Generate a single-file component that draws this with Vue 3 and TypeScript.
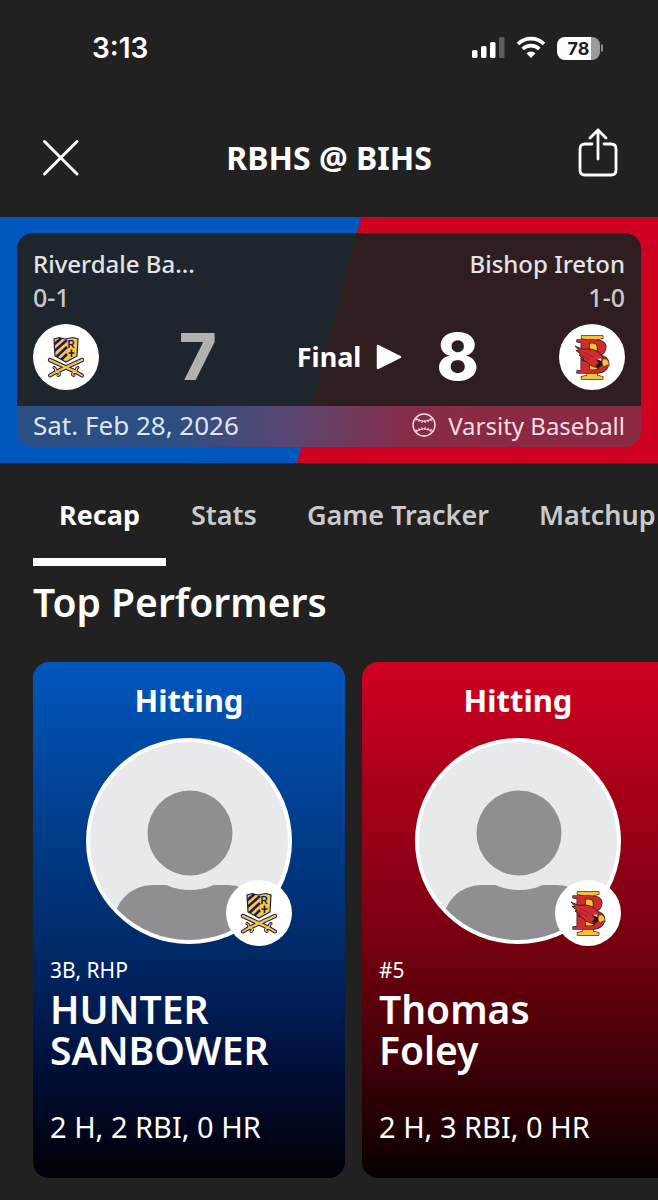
<script setup lang="ts">
import { ref } from 'vue'

type Team = 'riverdale' | 'ireton'

interface Performer {
  team: Team
  category: string
  detail: string
  first: string
  last: string
  stats: string
}

const tabs: string[] = ['Recap', 'Stats', 'Game Tracker', 'Matchup']
const activeTab = ref<string>('Recap')

const performers: Performer[] = [
  { team: 'riverdale', category: 'Hitting', detail: '3B, RHP', first: 'HUNTER', last: 'SANBOWER', stats: '2 H, 2 RBI, 0 HR' },
  { team: 'ireton', category: 'Hitting', detail: '#5', first: 'Thomas', last: 'Foley', stats: '2 H, 3 RBI, 0 HR' },
]
</script>

<template>
  <svg class="defs" aria-hidden="true">
    <defs>
      <clipPath id="shield-clip"><path d="M21 15 L26 13.5 L32 15 L40 13.5 L45 15 L44 32 L33 38 L22 32 Z" /></clipPath>
      <mask id="neck-mask">
        <rect width="206" height="206" fill="#fff" />
        <circle cx="104" cy="95" r="57" fill="#000" />
      </mask>
      <clipPath id="face-clip"><circle cx="103" cy="103" r="99" /></clipPath>
    </defs>
  </svg>
  <svg class="defs symbols" aria-hidden="true">
    <symbol id="logo-riverdale" viewBox="0 0 66 66">
      <circle cx="33" cy="33" r="33" fill="#fff" />
      <g clip-path="url(#shield-clip)">
        <rect x="20" y="12" width="26" height="28" fill="#f8c93c" />
        <path d="M18 23 L32 11 M18 30 L34 16 M20 36 L34 23 M25 39 L34 30" stroke="#1c1a5e" stroke-width="2.6" />
      </g>
      <path d="M21 15 L26 13.5 L32 15 L40 13.5 L45 15 L44 32 L33 38 L22 32 Z" fill="none" stroke="#1c1a5e" stroke-width="1.2" />
      <text x="34.5" y="24" font-family="Liberation Sans, Arial, sans-serif" font-weight="700" font-size="10" fill="#1c1a5e">R</text>
      <path d="M38.5 25.5 V33 M35.5 29 H41.5" stroke="#1c1a5e" stroke-width="1.6" />
      <g fill="none" stroke-linecap="round" stroke-linejoin="round">
        <g stroke="#1c1a5e">
          <path d="M17 36 L43 48 M49 36 L23 48" stroke-width="4.4" />
          <path d="M43 48 L49 51.5 M23 48 L17 51.5" stroke-width="4" />
          <path d="M45 43.5 C42 44.5 44.5 47.5 41.5 48 C39 48.5 39 51 41 51.5 M21 43.5 C24 44.5 21.5 47.5 24.5 48 C27 48.5 27 51 25 51.5" stroke-width="3" />
        </g>
        <g stroke="#f8c93c">
          <path d="M17 36 L43 48 M49 36 L23 48" stroke-width="2.4" />
          <path d="M43 48 L49 51.5 M23 48 L17 51.5" stroke-width="2" />
          <path d="M45 43.5 C42 44.5 44.5 47.5 41.5 48 C39 48.5 39 51 41 51.5 M21 43.5 C24 44.5 21.5 47.5 24.5 48 C27 48.5 27 51 25 51.5" stroke-width="1.3" />
        </g>
      </g>
    </symbol>
    <symbol id="logo-ireton" viewBox="0 0 66 66">
      <circle cx="33" cy="33" r="33" fill="#fff" />
      <g font-family="Liberation Serif, Times New Roman, serif" font-weight="700" text-anchor="middle" paint-order="stroke" stroke-linejoin="round">
        <text x="33" y="55" font-size="66" fill="#f4c13c" stroke="#3a2320" stroke-width="1.4">I</text>
        <text x="34" y="49" font-size="50" fill="#cf2b30" stroke="#3a2320" stroke-width="1.6">B</text>
      </g>
      <path d="M16 22 L24 25.5 C31 24 39 25.5 43 32 L45 35 L43 41 L39 44 L35.5 43 L31 41 L27 37.5 L23 36 L25 35 L20 31 L22 30.5 L17 26.5 L20 26.5 Z" fill="#cf2b30" stroke="#2b1716" stroke-width=".8" />
      <path d="M24 28 L34 33 M23 31.5 L32 36" stroke="#8f1a20" stroke-width=".8" />
      <path d="M37 35 L43 36 L43 41 L39 44 L36.5 41.5 L39.5 39 Z" fill="#2b1716" />
      <path d="M38 35 L42 34.5 L42.5 37 Z" fill="#fff" />
      <path d="M43.5 35 C48 33.5 50.5 37 50 42 C48.5 40.5 47 41 45.5 43 C43 42 42.5 39 43.5 35 Z" fill="#f4c13c" stroke="#3a2320" stroke-width=".8" />
    </symbol>
  </svg>

  <main class="app">
    <div class="status">
      <span class="time">3:13</span>
      <div class="status-icons">
        <svg width="34" height="24" viewBox="0 0 34 24" aria-hidden="true">
          <rect x="1" y="14" width="5.5" height="8" rx="1.5" fill="#fff" />
          <rect x="10" y="10" width="5.5" height="12" rx="1.5" fill="#fff" />
          <rect x="19" y="6" width="5.5" height="16" rx="1.5" fill="#fff" />
          <rect x="28" y="1" width="5.5" height="21" rx="1.5" fill="#5d5d5d" />
        </svg>
        <svg class="wifi" width="30" height="24" viewBox="0 0 30 24" fill="none" stroke="#fff" stroke-width="3.6" aria-hidden="true">
          <path d="M2 8 A18.5 18.5 0 0 1 28 8" />
          <path d="M6.7 13 A11.8 11.8 0 0 1 23.3 13" />
          <path d="M15 22 L10.5 17.3 A6.4 6.4 0 0 1 19.5 17.3 Z" fill="#fff" stroke="none" />
        </svg>
        <div class="battery"><span class="battery-body">78</span><span class="battery-tip"></span></div>
      </div>
    </div>

    <header class="topbar">
      <button class="icon-btn" type="button" aria-label="Close">
        <svg width="40" height="40" viewBox="0 0 40 40" fill="none" stroke="#fff" stroke-width="3" stroke-linecap="round">
          <path d="M4.5 3.5 L37 36 M37 3.5 L4.5 36" />
        </svg>
      </button>
      <h1>RBHS @ BIHS</h1>
      <button class="icon-btn" type="button" aria-label="Share">
        <svg width="40" height="60" viewBox="0 0 40 60" fill="none" stroke="#fff" stroke-width="2.8" stroke-linecap="round" stroke-linejoin="round">
          <path d="M14 16 H7 Q2 16 2 21 V42 Q2 47 7 47 H33 Q38 47 38 42 V21 Q38 16 33 16 H26" />
          <path d="M20 31 V2 M12 10 L20 2 L28 10" />
        </svg>
      </button>
    </header>

    <section class="hero">
      <div class="scorecard">
        <div class="score-main">
          <div class="row names"><span>Riverdale Ba...</span><span>Bishop Ireton</span></div>
          <div class="row records"><span>0-1</span><span>1-0</span></div>
          <div class="row scores">
            <svg class="logo" role="img" aria-label="Riverdale"><use href="#logo-riverdale" /></svg>
            <span class="score lost">7</span>
            <div class="result">
              <span class="final">Final
                <svg width="28" height="28" viewBox="0 0 28 28" aria-hidden="true"><path d="M3 3 L25 14 L3 25 Z" fill="#fff" stroke="#fff" stroke-width="2.5" stroke-linejoin="round" /></svg>
              </span>
              <span class="score">8</span>
            </div>
            <svg class="logo" role="img" aria-label="Bishop Ireton"><use href="#logo-ireton" /></svg>
          </div>
        </div>
        <div class="row score-foot">
          <span class="date">Sat. Feb 28, 2026</span>
          <span class="sport">
            <svg width="24" height="24" viewBox="0 0 24 24" fill="none" stroke="#f1dde1" aria-hidden="true">
              <circle cx="12" cy="12" r="11" stroke-width="1.4" />
              <path d="M3.5 5.5 Q12 11 20.5 5.5 M3.5 18.5 Q12 13 20.5 18.5" stroke-width="1.1" />
              <path d="M4 6 Q12 11 20 6 M4 18 Q12 13 20 18" stroke-width="2.8" stroke-dasharray="1 2" />
            </svg>
            Varsity Baseball
          </span>
        </div>
      </div>
    </section>

    <nav class="tabs" aria-label="Game sections">
      <button v-for="tab in tabs" :key="tab" type="button" class="tab" :class="{ active: tab === activeTab }" @click="activeTab = tab">{{ tab }}</button>
    </nav>

    <section class="performers">
      <h2>Top Performers</h2>
      <div class="cards">
        <article v-for="p in performers" :key="p.last" class="card" :class="p.team">
          <h3>{{ p.category }}</h3>
          <div class="avatar">
            <svg class="face" viewBox="0 0 206 206" aria-hidden="true">
              <circle cx="103" cy="103" r="103" fill="#fff" />
              <circle cx="103" cy="103" r="99" fill="#e8e9eb" />
              <circle cx="104" cy="95" r="42.5" fill="#8f8f91" />
              <g clip-path="url(#face-clip)"><rect x="28" y="147" width="152" height="80" rx="38" fill="#8f8f91" mask="url(#neck-mask)" /></g>
            </svg>
            <svg class="logo badge" aria-hidden="true"><use :href="'#logo-' + p.team" /></svg>
          </div>
          <p class="detail">{{ p.detail }}</p>
          <p class="name">{{ p.first }}<br />{{ p.last }}</p>
          <p class="line">{{ p.stats }}</p>
        </article>
      </div>
    </section>
  </main>
</template>

<style>
body {
  background: #212121;
}
</style>

<style scoped>
.defs {
  position: absolute;
  width: 0;
  height: 0;
}
.symbols {
  visibility: hidden;
}
.app {
  min-height: 100vh;
  overflow: hidden;
  background: #212121;
  color: #fff;
  font-family: 'Noto Sans', 'Open Sans', sans-serif;
}
h1, h2, h3, p {
  margin: 0;
}
svg {
  display: block;
  flex: none;
}
button {
  border: 0;
  padding: 0;
  background: none;
  color: inherit;
  font-family: inherit;
  cursor: pointer;
}
.status {
  display: flex;
  justify-content: space-between;
  align-items: center;
  height: 96px;
  padding: 0 55px 0 92px;
}
.time {
  font: 600 28px/32px Inter, sans-serif;
}
.status-icons {
  display: flex;
  align-items: center;
}
.wifi {
  margin: 0 11px;
}
.battery {
  display: flex;
  align-items: center;
  gap: 1px;
}
.battery-body {
  width: 43px;
  height: 23px;
  border-radius: 8px;
  background: linear-gradient(90deg, #fff 78%, #9b9b9b 78%);
  color: #212121;
  font: 700 18px/23px Inter, sans-serif;
  text-align: center;
}
.battery-tip {
  width: 2px;
  height: 8px;
  border-radius: 0 2px 2px 0;
  background: #8a8a8a;
}
.topbar {
  display: flex;
  justify-content: space-between;
  align-items: center;
  height: 121px;
  padding: 2px 40px 0;
  box-sizing: border-box;
}
.icon-btn {
  display: grid;
  place-items: center;
  height: 60px;
}
h1 {
  font-size: 32px;
  line-height: 40px;
  font-weight: 700;
}
.hero {
  padding: 16px 17px;
  background: linear-gradient(104.6deg, #0057bd 50%, #d00022 50%);
}
.scorecard {
  overflow: hidden;
  border-radius: 16px;
}
.row {
  display: flex;
  justify-content: space-between;
  align-items: center;
}
.score-main {
  padding: 15px 16px 16px;
  background: rgba(33, 33, 33, .92);
}
.names {
  font-size: 24px;
  line-height: 32px;
  font-weight: 500;
  color: #e3e4e6;
}
.records {
  font-size: 25px;
  line-height: 34px;
  font-weight: 500;
  color: #c8c9cb;
}
.scores {
  margin-top: 10px;
}
.logo {
  width: 66px;
  height: 66px;
}
.result {
  display: flex;
  align-items: center;
  gap: 33px;
}
.score {
  font-family: Inter, sans-serif;
  font-size: 64px;
  line-height: 66px;
  font-weight: 800;
}
.lost {
  color: #b1b1b1;
}
.final {
  display: flex;
  align-items: center;
  gap: 14px;
  font-size: 27px;
  line-height: 36px;
  font-weight: 700;
}
.score-foot {
  height: 41px;
  padding: 0 16px 3px;
  box-sizing: border-box;
  font-size: 24px;
  background: linear-gradient(90deg, #2b4f82 25%, #5d4570 45%, #842d48 62%, #8a2a42 75%);
  color: #dfe5f2;
}
.date {
  font-size: 26px;
}
.sport {
  display: flex;
  align-items: center;
  gap: 12px;
  color: #f1dde1;
}
.tabs {
  display: flex;
  height: 103px;
  padding-left: 33px;
}
.tab {
  flex: none;
  padding: 8px 25px 0;
  border-bottom: 8px solid transparent;
  font-size: 27px;
  font-weight: 600;
  color: #c9cacc;
}
.tab.active {
  padding: 8px 26px 0;
  border-color: #fff;
  color: #fff;
  font-weight: 700;
}
.performers {
  padding: 8px 0 22px 33px;
}
h2 {
  font-size: 39px;
  line-height: 56px;
  font-weight: 600;
}
.cards {
  display: flex;
  gap: 17px;
  margin-top: 32px;
}
.card {
  flex: none;
  width: 312px;
  padding: 16px 17px 32px;
  box-sizing: border-box;
  border-radius: 16px;
}
.riverdale {
  background: linear-gradient(#0057bd, #002a68 55%, #001f58 65%, #000f38 79%, #000006);
}
.ireton {
  background: linear-gradient(#d00022, #75000f 55%, #3c0006 79%, #080000);
}
h3 {
  font-size: 31px;
  line-height: 44px;
  font-weight: 700;
  text-align: center;
}
.avatar {
  position: relative;
  width: 206px;
  height: 206px;
  margin: 16px auto 12px;
}
.badge {
  position: absolute;
  right: 0;
  bottom: -2px;
}
.detail {
  font-size: 21px;
  line-height: 28px;
}
.name {
  margin-top: 4px;
  font-size: 39px;
  line-height: 41px;
  font-weight: 600;
}
.line {
  margin-top: 38px;
  font-size: 29px;
  line-height: 38px;
}
</style>
